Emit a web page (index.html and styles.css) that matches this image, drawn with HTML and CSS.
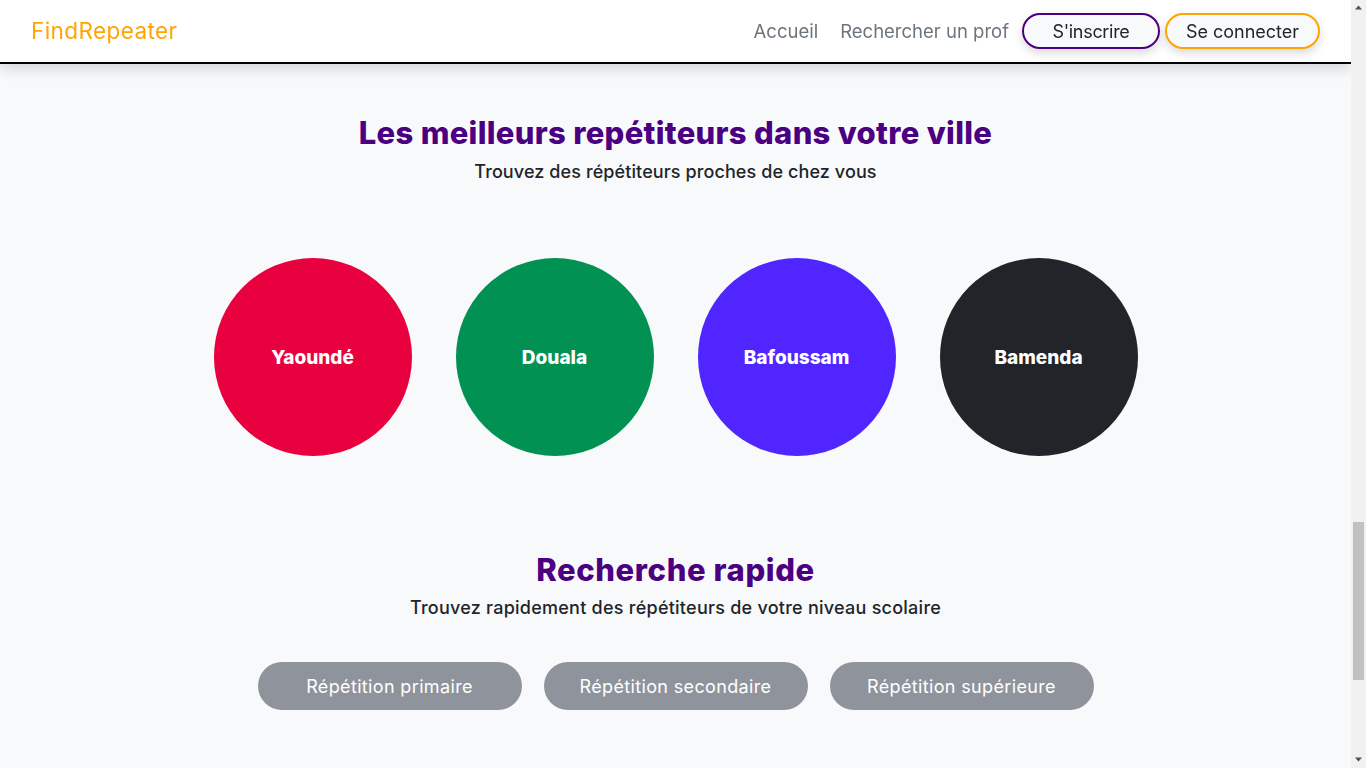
FILE: index.html
```html
<!DOCTYPE html>
<html lang="fr">
<head>
<meta charset="utf-8">
<title>FindRepeater</title>
<link rel="stylesheet" href="styles.css">
</head>
<body>
<div class="scroller" id="scroller">
  <header class="topbar">
    <a class="brand" href="#">FindRepeater</a>
    <nav class="nav">
      <a class="nav-link" href="#">Accueil</a>
      <a class="nav-link" href="#">Rechercher un prof</a>
      <a class="btn-pill btn-signup" href="#">S'inscrire</a>
      <a class="btn-pill btn-login" href="#">Se connecter</a>
    </nav>
  </header>

  <main>
    <div class="hero" aria-hidden="true"></div>

    <section class="cities">
      <h2 class="section-title">Les meilleurs repétiteurs dans votre ville</h2>
      <p class="section-sub">Trouvez des répétiteurs proches de chez vous</p>
      <div class="city-row">
        <a class="city city-red" href="#">Yaoundé</a>
        <a class="city city-green" href="#">Douala</a>
        <a class="city city-blue" href="#">Bafoussam</a>
        <a class="city city-dark" href="#">Bamenda</a>
      </div>
    </section>

    <section class="quick">
      <h2 class="section-title title-short">Recherche rapide</h2>
      <p class="section-sub sub-wide">Trouvez rapidement des répétiteurs de votre niveau scolaire</p>
      <div class="level-row">
        <a class="level" href="#">Répétition primaire</a>
        <a class="level" href="#">Répétition secondaire</a>
        <a class="level" href="#">Répétition supérieure</a>
      </div>
    </section>
  </main>
  <footer class="footer" aria-hidden="true"></footer>
</div>
<div class="vscroll" aria-hidden="true">
  <div class="vs-btn">
    <svg width="15" height="15" viewBox="0 0 15 15"><polygon points="7.5,5.5 11,9.5 4,9.5" fill="#505050"/></svg>
  </div>
  <div class="vs-track"><div class="vs-thumb"></div></div>
  <div class="vs-btn">
    <svg width="15" height="15" viewBox="0 0 15 15"><polygon points="4,4.5 11,4.5 7.5,8.5" fill="#505050"/></svg>
  </div>
</div>
<script src="script.js"></script>
</body>
</html>
```

FILE: styles.css
```css
html, body {
  margin: 0;
  padding: 0;
  height: 100%;
  overflow: hidden;
}
body {
  display: flex;
  background: #f8f9fa;
  font-family: "Inter", "Open Sans", sans-serif;
  color: #212529;
}
a { text-decoration: none; }

.scroller {
  flex: 1;
  min-width: 0;
  height: 100vh;
  overflow-y: scroll;
  scrollbar-width: none;
  background: #f8f9fa;
}
.scroller::-webkit-scrollbar { display: none; }

.vscroll {
  width: 15px;
  flex: none;
  height: 100vh;
  background: #f1f1f1;
  display: flex;
  flex-direction: column;
}
.vs-btn {
  height: 15px;
  flex: none;
}
.vs-btn svg { display: block; }
.vs-track {
  flex: 1;
}
.vs-thumb {
  margin: 507px 2px 0;
  height: 158px;
  background: #c1c1c1;
}

.topbar {
  position: sticky;
  top: 0;
  z-index: 10;
  height: 62px;
  background: #ffffff;
  border-bottom: 2px solid #000;
  box-shadow: 0 6px 12px rgba(0,0,0,0.13);
  display: flex;
  align-items: center;
  justify-content: space-between;
  padding: 0 31px;
}
.brand {
  color: #ffa500;
  font-size: 22.5px;
  letter-spacing: 0.4px;
  font-weight: 400;
  padding-bottom: 1px;
}
.nav {
  display: flex;
  align-items: center;
}
.nav-link {
  color: #6c757d;
  font-size: 18.5px;
  padding: 0 11px;
}
.nav-link + .nav-link { margin-right: 2px; }
.btn-pill {
  display: inline-flex;
  align-items: center;
  justify-content: center;
  box-sizing: border-box;
  height: 36px;
  border-radius: 18px;
  border: 2px solid;
  background: #f8f9fa;
  color: #212529;
  font-size: 18px;
  box-shadow: 0 4px 10px rgba(0,0,0,0.15);
}
.btn-signup { width: 138px; border-color: #4b0082; margin-right: 5px; letter-spacing: -0.3px; }
.btn-login { width: 155px; border-color: #ffa500; }

.hero {
  height: 2455px;
  background: #2b2b2b;
}

.cities {
  padding: 49px 0 47px;
  text-align: center;
}
.section-title {
  margin: 0;
  color: #4b0082;
  font-size: 31px;
  font-weight: 800;
  line-height: 40px;
  letter-spacing: 0.3px;
}
.title-short { letter-spacing: 0.6px; }
.section-sub {
  margin: 6px 0 0;
  font-size: 18px;
  font-weight: 500;
  line-height: 26px;
  letter-spacing: 0.1px;
}
.sub-wide { letter-spacing: 0.25px; margin-top: 5px; }
.city-row {
  display: flex;
  justify-content: center;
  gap: 44px;
  margin-top: 73px;
}
.city {
  width: 198px;
  height: 198px;
  border-radius: 50%;
  display: flex;
  align-items: center;
  justify-content: center;
  color: #fff;
  font-size: 19px;
  font-weight: 800;
}
.city-red { background: #e8003f; }
.city-green { background: #009153; }
.city-blue { background: #5025ff; }
.city-dark { background: #212429; }

.quick {
  padding: 47px 0 58px;
  text-align: center;
}
.level-row {
  display: flex;
  justify-content: center;
  gap: 22px;
  margin-top: 41px;
}
.level {
  width: 264px;
  height: 48px;
  border-radius: 24px;
  background: #8f949c;
  color: #fff;
  font-size: 18px;
  letter-spacing: 0.35px;
  display: flex;
  align-items: center;
  justify-content: center;
}
.footer {
  height: 354px;
  background: #f8f9fa;
}
```

FILE: script.js
```js
(function () {
  var s = document.getElementById('scroller');
  function go() { s.scrollTop = 2455; }
  go();
  window.addEventListener('DOMContentLoaded', go);
  window.addEventListener('load', go);
})();
```
